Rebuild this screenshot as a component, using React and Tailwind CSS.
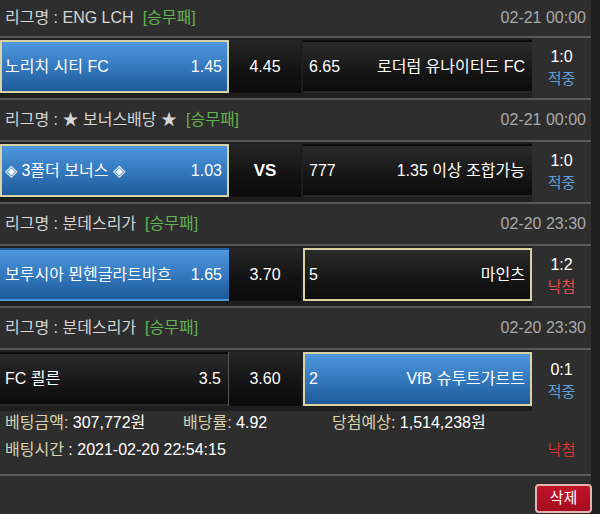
const font = { fontFamily: '"Liberation Sans", "Noto Sans CJK KR", sans-serif' }

const sections = [
  {
    league: 'ENG LCH',
    date: '02-21 00:00',
    first: true,
    home: { name: '노리치 시티 FC', odds: '1.45', win: true, pick: true },
    mid: '4.45',
    away: { name: '로더럼 유나이티드 FC', odds: '6.65' },
    score: '1:0',
    hit: true,
  },
  {
    league: '★ 보너스배당 ★',
    date: '02-21 00:00',
    home: { name: '◈ 3폴더 보너스 ◈', odds: '1.03', win: true, pick: true },
    mid: 'VS',
    midBold: true,
    away: { name: '1.35 이상 조합가능', odds: '777' },
    score: '1:0',
    hit: true,
  },
  {
    league: '분데스리가',
    date: '02-20 23:30',
    home: { name: '보루시아 묀헨글라트바흐', odds: '1.65', win: true },
    mid: '3.70',
    away: { name: '마인츠', odds: '5', pick: true },
    score: '1:2',
    hit: false,
  },
  {
    league: '분데스리가',
    date: '02-20 23:30',
    last: true,
    home: { name: 'FC 쾰른', odds: '3.5', divider: true },
    mid: '3.60',
    away: { name: 'VfB 슈투트가르트', odds: '2', win: true, pick: true },
    score: '0:1',
    hit: true,
  },
]

function Cell({ side, children, className }) {
  const bg = side.win
    ? 'bg-[linear-gradient(180deg,#4f98de_0%,#3579bf_50%,#1d5a98_100%)]'
    : 'bg-[linear-gradient(180deg,#2b2b2b_0%,#161616_60%,#0b0b0b_100%)]'
  const border = side.pick ? 'border-2 border-[#d9d2a2]' : 'border-2 border-transparent'
  return <div className={`flex h-full items-center justify-between ${bg} ${border} ${className}`}>{children}</div>
}

function Section({ s }) {
  return (
    <div>
      <div className={`flex items-center justify-between border-b-2 border-[#5a5a5a] px-[5px] ${s.first ? 'h-[38px]' : 'h-[42px]'}`}>
        <div className="flex items-center gap-[9px] text-[16px] text-[#d6d6d6]">
          <span>리그명 : {s.league}</span>
          <span className="text-[#63b34f]">[승무패]</span>
        </div>
        <span className="text-[16px] text-[#a9a9a9]">{s.date}</span>
      </div>
      <div className={`flex ${s.last ? 'h-[61px]' : 'h-[62px] border-b-2 border-[#5a5a5a]'}`}>
        <div className="flex flex-1 bg-[#1e1e1e] pt-[2px] pb-[5px]">
          <div className={`w-[229px] shrink-0 ${s.home.divider ? 'border-r border-[#555]' : ''}`}>
            <Cell side={s.home} className="pl-[3px] pr-[5px]">
              <span className="text-[16px] text-white">{s.home.name}</span>
              <span className="text-[16px] text-white">{s.home.odds}</span>
            </Cell>
          </div>
          <div className="flex w-[72px] shrink-0 items-center justify-center bg-[linear-gradient(180deg,#262626_0%,#121212_60%,#0a0a0a_100%)]">
            <span className={`text-white ${s.midBold ? 'text-[17px] font-bold' : 'text-[16px]'}`}>{s.mid}</span>
          </div>
          <div className="ml-[2px] w-[229px] shrink-0">
            <Cell side={s.away} className="pl-[4px] pr-[5px]">
              <span className="text-[16px] text-white">{s.away.odds}</span>
              <span className="text-[16px] text-white">{s.away.name}</span>
            </Cell>
          </div>
        </div>
        <div className="flex w-[59px] shrink-0 flex-col items-center justify-center leading-[22px]">
          <span className="text-[16px] text-white">{s.score}</span>
          <span className={`text-[15px] ${s.hit ? 'text-[#5f9fd9]' : 'text-[#e0514f]'}`}>{s.hit ? '적중' : '낙첨'}</span>
        </div>
      </div>
    </div>
  )
}

export default function App() {
  return (
    <div className="flex h-[514px] w-[600px] overflow-hidden bg-[#1f1f1f]" style={font}>
      <div className="flex w-[591px] flex-col bg-[#2e2e2e]">
        {sections.map((s, i) => (
          <Section key={i} s={s} />
        ))}
        <div className="h-[65px] shrink-0 border-b-2 border-[#5a5a5a]">
          <div className="flex h-[24px] items-center pl-[5px] text-[16px]">
            <div className="w-[178px]">
              <span className="text-[#d9d3ad]">베팅금액: </span>
              <span className="text-white">307,772원</span>
            </div>
            <div className="w-[149px]">
              <span className="text-[#d9d3ad]">배당률: </span>
              <span className="text-white">4.92</span>
            </div>
            <div>
              <span className="text-[#d9d3ad]">당첨예상: </span>
              <span className="text-white">1,514,238원</span>
            </div>
          </div>
          <div className="flex h-[30px] items-center text-[16px]">
            <div className="flex-1 pl-[5px]">
              <span className="text-[#d9d3ad]">배팅시간</span>
              <span className="text-white"> : 2021-02-20 22:54:15</span>
            </div>
            <div className="w-[59px] text-center text-[15px] text-[#d9302c]">낙첨</div>
          </div>
        </div>
        <div className="flex flex-1 items-start justify-end">
          <button className="mr-[-1px] mt-[8px] h-[29px] w-[57px] rounded-[4px] border-2 border-[#e7b3b3] bg-[linear-gradient(180deg,#c0142a_0%,#a50d1f_100%)] text-[15px] text-white">
            삭제
          </button>
        </div>
      </div>
    </div>
  )
}
